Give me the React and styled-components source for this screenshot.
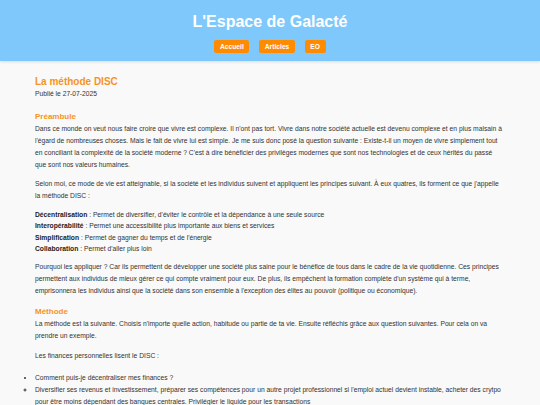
import React from 'react';
import styled, { createGlobalStyle } from 'styled-components';

const GlobalStyle = createGlobalStyle`
  html, body {
    margin: 0;
    padding: 0;
    background: #f9f9f9;
    font-family: "Liberation Sans", Arial, sans-serif;
    color: #333;
  }
`;

const Header = styled.header`
  background: #7ec8fb;
  padding: 12px 0 8px;
  text-align: center;
  box-shadow: 0 1px 3px rgba(0, 0, 0, 0.12);
`;

const SiteTitle = styled.h1`
  margin: 0 0 8px;
  font-size: 16px;
  line-height: 20px;
  font-weight: 700;
  color: #fff;
`;

const Nav = styled.nav`
  display: flex;
  justify-content: center;
  gap: 10px;
`;

const NavButton = styled.a`
  display: block;
  height: 13px;
  line-height: 13px;
  padding: 0 5.5px;
  background: #ff8c00;
  color: #fff;
  font-size: 6.7px;
  font-weight: 700;
  border-radius: 2px;
  text-decoration: none;
`;

const Main = styled.main`
  padding: 14.7px 35px 0;
  width: 470px;
  font-size: 6.72px;
  line-height: 12px;
`;

const Title = styled.h2`
  margin: 0;
  font-size: 10px;
  line-height: 12px;
  font-weight: 700;
  color: #f7931e;
`;

const Meta = styled.div`
  margin: 0;
`;

const Section = styled.h3`
  margin: ${(p) => p.$top || 11}px 0 0;
  font-size: 8px;
  line-height: 12px;
  font-weight: 700;
  color: #f7931e;
`;

const Para = styled.p`
  margin: ${(p) => p.$top ?? 7}px 0 0;
  line-height: ${(p) => p.$lh || 12}px;
`;

const Strong = styled.strong`
  font-weight: 700;
  color: #222;
`;

const List = styled.ul`
  margin: ${(p) => p.$top ?? 0}px 0 0;
  padding: 0;
  list-style-type: ${(p) => p.$type || 'disc'};
`;

const Item = styled.li`
  line-height: 12px;
`;

const principles = [
  ['Décentralisation', "Permet de diversifier, d'éviter le contrôle et la dépendance à une seule source"],
  ['Interopérabilité', 'Permet une accessibilité plus importante aux biens et services'],
  ['Simplification', "Permet de gagner du temps et de l'énergie"],
  ['Collaboration', "Permet d'aller plus loin"],
];

export default function App() {
  return (
    <>
      <GlobalStyle />
      <Header>
        <SiteTitle>L'Espace de Galacté</SiteTitle>
        <Nav>
          <NavButton href="#">Accueil</NavButton>
          <NavButton href="#">Articles</NavButton>
          <NavButton href="#">EO</NavButton>
        </Nav>
      </Header>
      <Main>
        <Title>La méthode DISC</Title>
        <Meta>Publié le 27-07-2025</Meta>

        <Section>Préambule</Section>
        <Para $top={0}>
          Dans ce monde on veut nous faire croire que vivre est complexe. Il n'ont pas tort. Vivre dans notre société actuelle est devenu complexe et en plus malsain à l'égard de nombreuses choses. Mais le fait de vivre lui est simple. Je me suis donc posé la question suivante : Existe-t-il un moyen de vivre simplement tout en conciliant la complexité de la société moderne ? C'est à dire bénéficier des privilèges modernes que sont nos technologies et de ceux hérités du passé que sont nos valeurs humaines.
        </Para>
        <Para>
          Selon moi, ce mode de vie est atteignable, si la société et les individus suivent et appliquent les principes suivant. À eux quatres, ils forment ce que j'appelle la méthode DISC :
        </Para>
        <Para $lh={11.4}>
          {principles.map(([term, text]) => (
            <React.Fragment key={term}>
              <Strong>{term}</Strong> : {text}
              <br />
            </React.Fragment>
          ))}
        </Para>
        <Para>
          Pourquoi les appliquer ? Car ils permettent de développer une société plus saine pour le bénéfice de tous dans le cadre de la vie quotidienne. Ces principes permettent aux individus de mieux gérer ce qui compte vraiment pour eux. De plus, ils empêchent la formation complète d'un système qui à terme, emprisonnera les individus ainsi que la société dans son ensemble à l'exception des élites au pouvoir (politique ou économique).
        </Para>

        <Section $top={8.5}>Méthode</Section>
        <Para $top={0}>
          La méthode est la suivante. Choisis n'importe quelle action, habitude ou partie de ta vie. Ensuite réfléchis grâce aux question suivantes. Pour cela on va prendre un exemple.
        </Para>
        <Para $top={8}>Les finances personnelles lisent le DISC :</Para>
        <List $top={10}>
          <Item>Comment puis-je décentraliser mes finances ?</Item>
        </List>
        <List $type="circle">
          <Item>
            Diversifier ses revenus et investissement, préparer ses compétences pour un autre projet professionnel si l'emploi actuel devient instable, acheter des crytpo pour être moins dépendant des banques centrales. Privilégier le liquide pour les transactions
          </Item>
        </List>
      </Main>
    </>
  );
}
